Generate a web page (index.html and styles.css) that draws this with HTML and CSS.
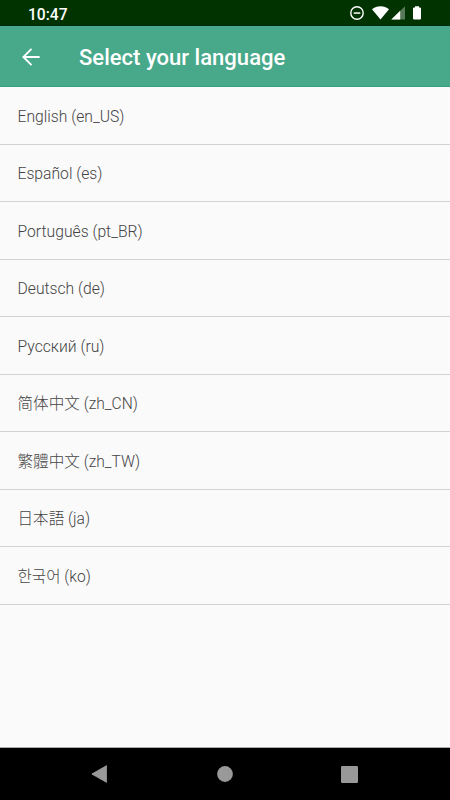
FILE: index.html
```html
<!DOCTYPE html>
<html lang="en">
<head>
<meta charset="utf-8">
<title>Select your language</title>
<link rel="stylesheet" href="styles.css">
</head>
<body>
<div class="screen">
  <div class="status">
    <span class="time">10:47</span>
    <svg class="status-icons" width="74" height="26" viewBox="0 0 74 26" fill="#fff">
      <circle cx="7" cy="13" r="6.2" fill="none" stroke="#fff" stroke-width="1.4"/>
      <path d="M3.7 12.3h6.6v1.5H3.7z"/>
      <path d="M22 9.2C26.5 5.2 34.5 5.2 39 9.2L30.5 19.4z"/>
      <path d="M55 6.2V19.5H41.3z" fill-opacity=".35"/>
      <path d="M50.2 10.8V19.5H41.3z"/>
      <path d="M65 6.2V7.4H64Q63 7.4 63 8.4V18.5Q63 19.5 64 19.5H70Q71 19.5 71 18.5V8.4Q71 7.4 70 7.4H69V6.2z"/>
    </svg>
  </div>
  <header class="appbar">
    <svg class="back" width="18" height="18" viewBox="0 0 18 18" fill="none" stroke="#fff" stroke-width="1.9"><path d="M17.6 9H1.4M9.5 .9L1.4 9l8.1 8.1"/></svg>
    <h1>Select your language</h1>
  </header>
  <ul class="languages">
    <li>English (en_US)</li>
    <li>Español (es)</li>
    <li>Português (pt_BR)</li>
    <li>Deutsch (de)</li>
    <li>Русский (ru)</li>
    <li lang="zh-CN">简体中文 (zh_CN)</li>
    <li lang="zh-TW">繁體中文 (zh_TW)</li>
    <li lang="ja">日本語 (ja)</li>
    <li lang="ko">한국어 (ko)</li>
  </ul>
  <nav class="navbar">
    <svg width="16" height="18" viewBox="0 0 16 18"><path d="M.8 9L15.6 .6V17.4z" fill="#999" stroke="#999" stroke-linejoin="round" stroke-width=".8"/></svg>
    <svg width="17" height="16" viewBox="0 0 17 16"><circle cx="9" cy="8" r="7.9" fill="#999"/></svg>
    <svg width="17" height="17" viewBox="0 0 17 17"><rect width="17" height="17" rx="1.3" fill="#999"/></svg>
  </nav>
</div>
</body>
</html>
```

FILE: styles.css
```css
* {
  box-sizing: border-box;
}

body {
  margin: 0;
  font-family: Roboto, "Noto Sans CJK SC", sans-serif;
}

.screen {
  width: 450px;
  height: 800px;
  display: flex;
  flex-direction: column;
  background: #fafafa;
  overflow: hidden;
}

.status {
  height: 26px;
  flex: none;
  display: flex;
  justify-content: space-between;
  padding: 0 26px 0 28px;
  background: #003300;
  border-bottom: 1px solid #052b13;
  color: #fff;
}

.time {
  font-size: 15.6px;
  font-weight: 500;
  line-height: 30px;
}

.status-icons {
  flex: none;
}

.appbar {
  height: 61px;
  flex: none;
  display: flex;
  align-items: center;
  padding: 0 22px;
  background: #47a88a;
  border-bottom: 1px solid #35a17e;
  color: #fff;
}

.back {
  flex: none;
  margin: 1px 39px 0 0;
}

h1 {
  margin: 3px 0 0;
  font-size: 22.05px;
  font-weight: 500;
  line-height: 28px;
  white-space: nowrap;
}

.languages {
  flex: 1;
  margin: 0;
  padding: 0.3px 0 0;
  list-style: none;
}

.languages li {
  height: 57.5px;
  padding: 0.7px 17.5px 0;
  border-bottom: 1px solid #d3d3d3;
  color: #444;
  font-size: 15.7px;
  font-weight: 300;
  line-height: 57px;
  white-space: nowrap;
}

.languages li:lang(zh-CN),
.languages li:lang(zh-TW),
.languages li:lang(ja),
.languages li:lang(ko) {
  padding-top: 1.5px;
  font-size: 15.6px;
}

.languages li:lang(zh-TW) {
  font-family: Roboto, "Noto Sans CJK TC", sans-serif;
}

.languages li:lang(ja) {
  font-family: Roboto, "Noto Sans CJK JP", sans-serif;
}

.languages li:lang(ko) {
  font-family: Roboto, "Noto Sans CJK KR", sans-serif;
}

.navbar {
  height: 53px;
  flex: none;
  display: flex;
  align-items: center;
  justify-content: space-between;
  padding: 0 92px 0 91px;
  background: #000;
  border-top: 1px solid #aaa;
}
```
